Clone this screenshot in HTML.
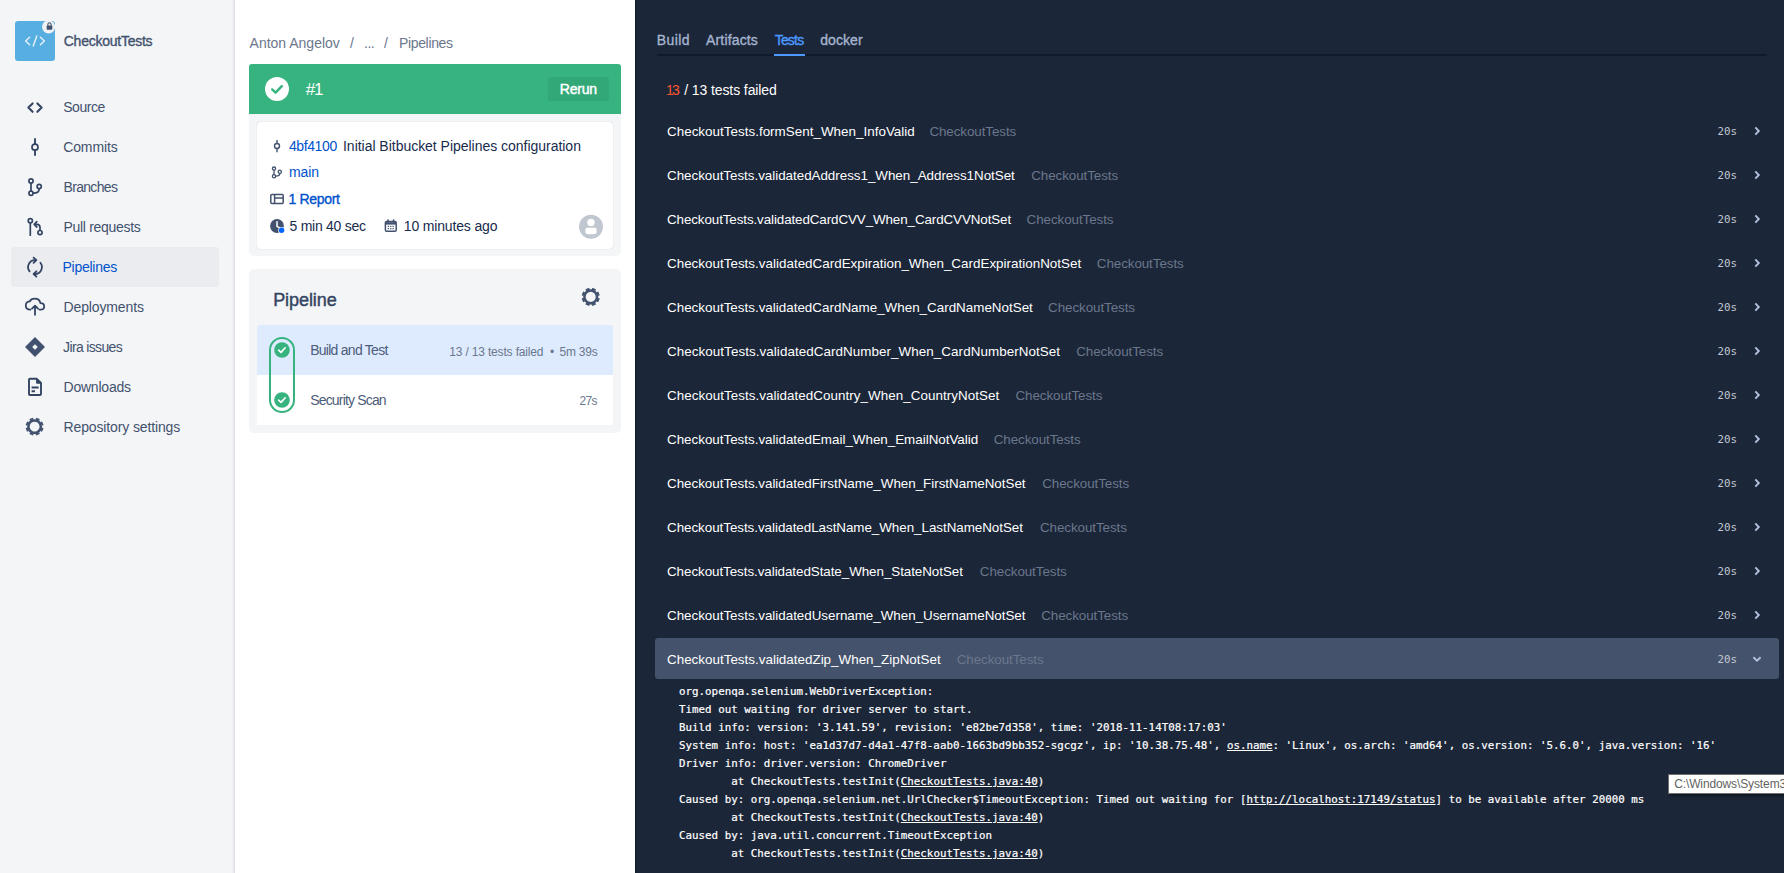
<!DOCTYPE html>
<html><head><meta charset="utf-8"><title>CheckoutTests / Pipelines</title>
<style>
*{box-sizing:border-box;margin:0;padding:0}
html,body{width:1784px;height:873px;overflow:hidden;background:#fff}
body{font-family:"Liberation Sans",sans-serif;font-size:14px;color:#172B4D;position:relative}
.abs{position:absolute;white-space:nowrap}
.sb{-webkit-text-stroke:0.35px currentColor}
.sb2{-webkit-text-stroke:0.45px currentColor}
#side{position:absolute;left:0;top:0;width:235px;height:873px;background:#f4f5f7;border-right:1px solid #dfe1e5}
#side .sh{position:absolute;left:232px;top:0;width:2px;height:873px;background:linear-gradient(to right,rgba(9,30,66,0),rgba(9,30,66,.07))}
#side .sel{position:absolute;left:11px;top:247px;width:208px;height:40px;background:#ebecf0;border-radius:3px}
.nav{position:absolute;left:63px;font-size:14px;color:#42526E;line-height:20px;white-space:nowrap}
.ico{position:absolute}
#mid{position:absolute;left:235px;top:0;width:400px;height:873px;background:#fff}
#mid .abs{line-height:20px}
#right{position:absolute;left:635px;top:0;width:1149px;height:873px;background:#1b2638;overflow:hidden}
.tab{position:absolute;top:30px;font-size:14px;color:#a5b4cf;line-height:20px;white-space:nowrap;-webkit-text-stroke:0.35px currentColor}
.row{position:absolute;left:20px;width:1124px;height:40px;border-radius:3px}
.row .n,.row .g{position:absolute;left:12px;top:11px;line-height:20px;font-size:13.4px;color:#fff;white-space:nowrap}
.row .g{color:#6b778c}
.row .d{position:absolute;right:42px;top:11px;line-height:20px;font-size:10.8px;font-family:"DejaVu Sans Mono","Liberation Mono",monospace;color:#c1c7d0}
.rsel .n,.rsel .g,.rsel .d{margin-top:1px}
.rsel svg{margin-top:1px}
.row svg{position:absolute;left:1096.4px;top:14.2px}
.log{position:absolute;left:44px;font-family:"DejaVu Sans Mono","Liberation Mono",monospace;font-size:10.8px;line-height:18px;color:#fff;white-space:pre;letter-spacing:0.022px;-webkit-text-stroke:0.2px #fff}
.log u{text-decoration:underline}
/*TUNE*/
#n0{letter-spacing:-0.250px;margin-left:0.75px}
#n1{letter-spacing:-0.440px;margin-left:0.20px}
#n2{letter-spacing:-0.117px;margin-left:0.20px}
#n3{letter-spacing:-0.679px;margin-left:0.50px}
#n4{letter-spacing:-0.300px;margin-left:0.50px}
#n5{letter-spacing:-0.263px;margin-left:-0.50px}
#n6{letter-spacing:-0.130px;margin-left:0.50px}
#n7{letter-spacing:-0.650px;margin-left:0.10px}
#n8{letter-spacing:-0.213px;margin-left:0.50px}
#n9{letter-spacing:-0.128px;margin-left:0.50px}
#b1{letter-spacing:-0.008px;margin-left:0.60px}
#b2{letter-spacing:-0.500px;margin-left:-1.00px}
#b3{letter-spacing:-0.331px;margin-left:-0.10px}
#h1{letter-spacing:-1.250px;margin-left:0.75px}
#h2{letter-spacing:-0.188px;margin-left:-0.25px}
#c1{letter-spacing:-0.383px;margin-left:-0.10px}
#c2{letter-spacing:-0.025px;margin-left:-0.50px}
#c3{letter-spacing:-0.133px;margin-left:0.00px}
#c4{letter-spacing:-0.343px;margin-left:-0.40px}
#c5{letter-spacing:-0.273px;margin-left:0.60px}
#c6{letter-spacing:-0.162px;margin-left:-0.20px}
#p0{letter-spacing:-0.071px;margin-left:0.20px}
#p1{letter-spacing:-0.738px;margin-left:0.20px}
#p4{letter-spacing:-0.825px;margin-left:0.20px}
#p2{letter-spacing:-0.163px;margin-left:-0.20px}
#p5{letter-spacing:-0.600px;margin-left:-0.20px}
#t1{letter-spacing:0.450px;margin-left:-0.30px}
#t2{letter-spacing:0.163px;margin-left:1.00px}
#t3{letter-spacing:-0.800px;margin-left:0.70px}
#t4{letter-spacing:0.080px;margin-left:-0.10px}
#s1{letter-spacing:-1.600px;margin-left:-0.10px}
#s2{letter-spacing:-0.094px;margin-left:0.40px}
#r0{letter-spacing:0.025px;margin-left:0.00px}
#g0{letter-spacing:-0.075px;margin-left:262.40px}
#r1{letter-spacing:-0.026px;margin-left:0.00px}
#g1{letter-spacing:-0.075px;margin-left:364.20px}
#r2{letter-spacing:-0.102px;margin-left:0.00px}
#g2{letter-spacing:-0.075px;margin-left:359.60px}
#r3{letter-spacing:0.018px;margin-left:0.00px}
#g3{letter-spacing:-0.075px;margin-left:429.80px}
#r4{letter-spacing:0.008px;margin-left:0.00px}
#g4{letter-spacing:-0.075px;margin-left:381.10px}
#r5{letter-spacing:0.069px;margin-left:0.00px}
#g5{letter-spacing:-0.075px;margin-left:409.20px}
#r6{letter-spacing:0.050px;margin-left:0.00px}
#g6{letter-spacing:-0.075px;margin-left:348.50px}
#r7{letter-spacing:-0.009px;margin-left:0.00px}
#g7{letter-spacing:-0.075px;margin-left:326.70px}
#r8{letter-spacing:-0.017px;margin-left:0.00px}
#g8{letter-spacing:-0.075px;margin-left:375.20px}
#r9{letter-spacing:-0.042px;margin-left:0.00px}
#g9{letter-spacing:-0.075px;margin-left:373.00px}
#r10{letter-spacing:-0.059px;margin-left:0.00px}
#g10{letter-spacing:-0.075px;margin-left:312.80px}
#r11{letter-spacing:-0.020px;margin-left:0.00px}
#g11{letter-spacing:-0.075px;margin-left:374.20px}
#r12{letter-spacing:0.013px;margin-left:0.00px}
#g12{letter-spacing:-0.075px;margin-left:289.70px}
#p3{letter-spacing:-0.18px}
/*END*/
</style></head><body>
<div id="side">
  <div class="sh"></div>
  <div class="sel"></div>
  <div class="abs" style="left:15px;top:21px;width:40px;height:40px;background:#57aee0;border-radius:3px"></div>
  <svg class="ico" style="left:0;top:0" width="234" height="450" viewBox="0 0 234 450" fill="none" stroke="#344563" stroke-width="2" stroke-linecap="round" stroke-linejoin="round">
    <!-- repo avatar glyph -->
    <g stroke="#e6f2fb" stroke-width="1.4">
      <path d="M29.6 37.2 L25.6 41 L29.6 44.8"/><path d="M40.4 37.2 L44.4 41 L40.4 44.8"/><path d="M36.8 36 L33.2 46"/>
    </g>
    <!-- lock badge -->
    <circle cx="48.6" cy="26.8" r="6.6" fill="#f0f1f4" stroke="none"/>
    <rect x="46.7" y="25.4" width="5.6" height="4.4" rx="0.8" fill="#42526E" stroke="none"/>
    <path d="M47.9 25.6 V24.4 A1.6 1.6 0 0 1 51.1 24.4 V25.6" stroke="#42526E" stroke-width="1.1"/>
    <!-- source -->
    <path d="M32.6 103.4 L28.4 107.6 L32.6 111.8 M37.4 103.4 L41.6 107.6 L37.4 111.8" stroke-width="2.1"/>
    <!-- commits -->
    <path d="M35 139 V144 M35 150.4 V155" stroke-width="1.9"/><circle cx="35" cy="147.2" r="3" stroke-width="1.7"/>
    <!-- branches -->
    <g stroke-width="1.7"><circle cx="31" cy="181" r="2.1"/><circle cx="31" cy="193.2" r="2.1"/><circle cx="39.2" cy="186.4" r="2.1"/>
    <path d="M31 183.4 V190.8 M39.2 188.8 C39.2 192.6 36.4 193.2 33.4 193.2"/></g>
    <!-- pull requests -->
    <g stroke-width="1.7"><circle cx="30.3" cy="220.8" r="2.1"/><circle cx="40" cy="232.6" r="2.1"/>
    <path d="M30.3 223.2 V235.2 M40 230.2 V227.4 C40 225.4 38.8 224.4 36.8 224.4 H34.6 M36.8 221.6 L34.2 224.4 L36.8 227.2"/></g>
    <!-- pipelines -->
    <g stroke-width="1.8"><path d="M29.6 271.4 A6.9 6.9 0 0 1 35 260.2 M40.4 262.8 A6.9 6.9 0 0 1 35 274"/>
    <path d="M33.6 257.6 L36.4 260.2 L33.6 262.9 M36.4 271.3 L33.6 274 L36.4 276.6"/></g>
    <!-- deployments -->
    <g stroke-width="1.8"><path d="M30.4 309.6 C27.6 309.6 25.8 307.8 25.8 305.4 C25.8 303 27.6 301.4 29.8 301.4 C30.6 299.6 32.6 298.6 34.8 298.6 C37.8 298.6 40 300.6 40.4 303.2 C42.6 303.2 44.2 304.6 44.2 306.4 C44.2 308.4 42.6 309.6 40.6 309.6 H39.4"/>
    <path d="M35 314.8 V306 M32 308.6 L35 305.6 L38 308.6"/></g>
    <!-- jira -->
    <path d="M35 337 L45 347 L35 357 L25 347 Z" fill="#42526E" stroke="none"/><path d="M35 344.2 L37.8 347 L35 349.8 L32.2 347 Z" fill="#f4f5f7" stroke="none"/>
    <!-- downloads -->
    <g stroke-width="1.9"><path d="M29 379.8 A1 1 0 0 1 30 378.8 H36.8 L41 383 V394 A1 1 0 0 1 40 395 H30 A1 1 0 0 1 29 394 Z"/><path d="M36.6 379 V383.2 H41" fill="#344563" stroke-width="1"/>
    <path d="M31.6 387.6 H38.6 M31.6 391.2 H35" stroke-width="2" stroke-linecap="butt"/></g>
    <!-- settings gear -->
    <g transform="translate(34.6,426.6) rotate(22.5)" stroke="#42526E"><circle r="6.2" stroke-width="2.5"/>
      <g stroke-width="3.9" stroke-linecap="butt"><path d="M0 -7 V-8.9 M0 7 V8.9 M-7 0 H-8.9 M7 0 H8.9"/><path d="M0 -7 V-8.9 M0 7 V8.9 M-7 0 H-8.9 M7 0 H8.9" transform="rotate(45)"/></g></g>
  </svg>
  <div class="abs sb" id="n0" style="left:63px;top:31px;font-size:14px;color:#42526E;line-height:20px">CheckoutTests</div>
  <div class="nav" id="n1" style="top:97px">Source</div>
  <div class="nav" id="n2" style="top:137px">Commits</div>
  <div class="nav" id="n3" style="top:177px">Branches</div>
  <div class="nav" id="n4" style="top:217px">Pull requests</div>
  <div class="nav" id="n5" style="top:257px;color:#0052CC">Pipelines</div>
  <div class="nav" id="n6" style="top:297px">Deployments</div>
  <div class="nav" id="n7" style="top:337px">Jira issues</div>
  <div class="nav" id="n8" style="top:377px">Downloads</div>
  <div class="nav" id="n9" style="top:417px">Repository settings</div>
</div>
<div id="mid">
  <div class="abs" id="b1" style="left:14px;top:33px;color:#6B778C">Anton Angelov</div>
  <div class="abs" style="left:115px;top:33px;color:#6B778C">/</div>
  <div class="abs" id="b2" style="left:130px;top:33px;color:#6B778C">...</div>
  <div class="abs" style="left:149px;top:33px;color:#6B778C">/</div>
  <div class="abs" id="b3" style="left:164px;top:33px;color:#6B778C">Pipelines</div>
  <div class="abs" style="left:14px;top:64px;width:372px;height:50px;background:#36B37E;border-radius:3px 3px 0 0"></div>
  <div class="abs" id="h1" style="left:70px;top:80px;font-size:17px;color:#fff">#1</div>
  <div class="abs" style="left:313px;top:77px;width:61px;height:24px;background:#33a877;border-radius:3px"></div>
  <div class="abs sb2" id="h2" style="left:325px;top:79px;color:#fff;font-size:14px">Rerun</div>
  <div class="abs" style="left:14px;top:114px;width:372px;height:142px;background:#f4f5f7;border-radius:0 0 5px 5px"></div>
  <div class="abs" style="left:22px;top:122px;width:356px;height:126.5px;background:#fff;border-radius:4px;box-shadow:0 0 1px rgba(9,30,66,.25)"></div>
  <div class="abs" id="c1" style="left:54px;top:136px;color:#0052CC">4bf4100</div>
  <div class="abs" id="c2" style="left:108.5px;top:136px">Initial Bitbucket Pipelines configuration</div>
  <div class="abs" id="c3" style="left:54px;top:162px;color:#0052CC">main</div>
  <div class="abs sb" id="c4" style="left:54px;top:189px;color:#0052CC">1 Report</div>
  <div class="abs" id="c5" style="left:54px;top:216px">5 min 40 sec</div>
  <div class="abs" id="c6" style="left:169px;top:216px">10 minutes ago</div>
  <div class="abs" style="left:14px;top:269px;width:372px;height:163.5px;background:#f4f5f7;border-radius:5px"></div>
  <div class="abs sb2" id="p0" style="left:38px;top:288px;font-size:18px;color:#344563;line-height:24px">Pipeline</div>
  <div class="abs" style="left:22px;top:324.5px;width:356px;height:50px;background:#DEEBFF;border-radius:3px 3px 0 0"></div>
  <div class="abs" style="left:22px;top:374.5px;width:356px;height:50px;background:#fff"></div>
  <div class="abs" style="left:34px;top:337px;width:26px;height:76px;border:2px solid #36B37E;border-radius:13px"></div>
  <div class="abs" id="p1" style="left:75px;top:340px;color:#4d5d7a">Build and Test</div>
  <div class="abs" id="p2" style="left:214.4px;top:342px;font-size:12px;color:#6B778C">13 / 13 tests failed</div>
  <div class="abs" style="left:314.9px;top:342px;font-size:12px;color:#6B778C">•</div>
  <div class="abs" id="p3" style="left:324.4px;top:342px;font-size:12px;color:#6B778C">5m 39s</div>
  <div class="abs" id="p4" style="left:75px;top:390px;color:#4d5d7a">Security Scan</div>
  <div class="abs" id="p5" style="left:344.6px;top:391px;font-size:12px;color:#6B778C">27s</div>
  <svg class="ico" style="left:0;top:0" width="400" height="450" viewBox="235 0 400 450" fill="none" stroke="#42526E" stroke-width="1.5" stroke-linecap="round" stroke-linejoin="round">
    <!-- header check -->
    <circle cx="277" cy="89" r="12" fill="#fff" stroke="none"/>
    <path d="M272.2 89.4 L275.6 92.6 L281.8 86.2" stroke="#36B37E" stroke-width="2.4"/>
    <!-- commit icon -->
    <path d="M277 140.4 V143.2 M277 148.8 V151.8" stroke-width="1.4"/><circle cx="277" cy="146" r="2.5" stroke-width="1.4"/>
    <!-- branch icon -->
    <g stroke-width="1.3"><circle cx="274" cy="168.6" r="1.6"/><circle cx="274" cy="176.2" r="1.6"/><circle cx="279.8" cy="171.8" r="1.6"/>
    <path d="M274 170.4 V174.4 M279.8 173.6 C279.8 175.8 278 176.2 275.8 176.2"/></g>
    <!-- report icon -->
    <g stroke-width="1.5"><rect x="270.8" y="194.6" width="12.4" height="8.8" rx="1"/><path d="M274.6 194.8 V203.2 M274.6 198 H283"/></g>
    <!-- clock icon -->
    <circle cx="277" cy="226" r="6.9" fill="#42526E" stroke="none"/>
    <path d="M277 221.8 V226.4 L279.6 227.8" stroke="#fff" stroke-width="1.5"/>
    <circle cx="281.6" cy="230.3" r="3.4" fill="#fff" stroke="none"/><circle cx="281.6" cy="230.3" r="2.7" fill="#0065FF" stroke="none"/>
    <!-- calendar -->
    <g stroke-width="1.5"><rect x="385.4" y="221.4" width="10.8" height="9.8" rx="1.2"/><path d="M385.6 223.4 H396" stroke-width="2.4" stroke-linecap="butt"/><path d="M388 220 V222 M393.6 220 V222" stroke-width="1.6"/>
    <path d="M387.8 226.4 H393.8 M387.8 228.6 H393.8" stroke-width="1.3" stroke-dasharray="1.3 1.05" stroke-linecap="butt"/></g>
    <!-- avatar -->
    <circle cx="591" cy="226.8" r="12" fill="#c1c7d0" stroke="none"/>
    <circle cx="591" cy="222.4" r="3.7" fill="#fff" stroke="none"/>
    <path d="M585.4 229.4 A1.6 1.6 0 0 1 587 227.8 H595 A1.6 1.6 0 0 1 596.6 229.4 V232.4 C596.6 235 585.4 235 585.4 232.4 Z" fill="#fff" stroke="none"/>
    <!-- gear -->
    <g transform="translate(590.7,296.9) rotate(22.5)" stroke="#42526E"><circle r="6.3" stroke-width="2.5"/>
      <g stroke-width="4" stroke-linecap="butt"><path d="M0 -7 V-9 M0 7 V9 M-7 0 H-9 M7 0 H9"/><path d="M0 -7 V-9 M0 7 V9 M-7 0 H-9 M7 0 H9" transform="rotate(45)"/></g></g>
    <!-- step checks -->
    <circle cx="282" cy="350" r="7.8" fill="#36B37E" stroke="none"/><path d="M278.6 350.2 L281 352.4 L285.2 347.8" stroke="#fff" stroke-width="1.7"/>
    <circle cx="282" cy="400" r="7.8" fill="#36B37E" stroke="none"/><path d="M278.6 400.2 L281 402.4 L285.2 397.8" stroke="#fff" stroke-width="1.7"/>
  </svg>
</div>
<div id="right">
  <div class="abs" style="left:0;top:0;width:1px;height:873px;background:#0c182e"></div>
  <div class="abs" style="left:22px;top:54px;width:1110px;height:2px;background:#111a2b"></div>
  <div class="abs" style="left:139px;top:54px;width:30.5px;height:2px;background:#4C9AFF"></div>
  <div class="tab" id="t1" style="left:22px">Build</div>
  <div class="tab" id="t2" style="left:70px">Artifacts</div>
  <div class="tab" id="t3" style="left:139px;color:#4C9AFF">Tests</div>
  <div class="tab" id="t4" style="left:185.3px">docker</div>
  <div class="abs" id="s1" style="left:31px;top:80px;line-height:20px;color:#FF5630">13</div>
  <div class="abs" id="s2" style="left:48.8px;top:80px;line-height:20px;color:#fff">/ 13 tests failed</div>
  <div class="row" style="top:111px"><div class="n" id="r0">CheckoutTests.formSent_When_InfoValid</div><div class="g" id="g0">CheckoutTests</div><div class="d">20s</div><svg width="12" height="12" viewBox="-6 -6 12 12"><path d="M-1.7 -3.6 L1.8 0 L-1.7 3.6" fill="none" stroke="#b3bfde" stroke-width="1.9" stroke-linejoin="miter"/></svg></div>
  <div class="row" style="top:155px"><div class="n" id="r1">CheckoutTests.validatedAddress1_When_Address1NotSet</div><div class="g" id="g1">CheckoutTests</div><div class="d">20s</div><svg width="12" height="12" viewBox="-6 -6 12 12"><path d="M-1.7 -3.6 L1.8 0 L-1.7 3.6" fill="none" stroke="#b3bfde" stroke-width="1.9" stroke-linejoin="miter"/></svg></div>
  <div class="row" style="top:199px"><div class="n" id="r2">CheckoutTests.validatedCardCVV_When_CardCVVNotSet</div><div class="g" id="g2">CheckoutTests</div><div class="d">20s</div><svg width="12" height="12" viewBox="-6 -6 12 12"><path d="M-1.7 -3.6 L1.8 0 L-1.7 3.6" fill="none" stroke="#b3bfde" stroke-width="1.9" stroke-linejoin="miter"/></svg></div>
  <div class="row" style="top:243px"><div class="n" id="r3">CheckoutTests.validatedCardExpiration_When_CardExpirationNotSet</div><div class="g" id="g3">CheckoutTests</div><div class="d">20s</div><svg width="12" height="12" viewBox="-6 -6 12 12"><path d="M-1.7 -3.6 L1.8 0 L-1.7 3.6" fill="none" stroke="#b3bfde" stroke-width="1.9" stroke-linejoin="miter"/></svg></div>
  <div class="row" style="top:287px"><div class="n" id="r4">CheckoutTests.validatedCardName_When_CardNameNotSet</div><div class="g" id="g4">CheckoutTests</div><div class="d">20s</div><svg width="12" height="12" viewBox="-6 -6 12 12"><path d="M-1.7 -3.6 L1.8 0 L-1.7 3.6" fill="none" stroke="#b3bfde" stroke-width="1.9" stroke-linejoin="miter"/></svg></div>
  <div class="row" style="top:331px"><div class="n" id="r5">CheckoutTests.validatedCardNumber_When_CardNumberNotSet</div><div class="g" id="g5">CheckoutTests</div><div class="d">20s</div><svg width="12" height="12" viewBox="-6 -6 12 12"><path d="M-1.7 -3.6 L1.8 0 L-1.7 3.6" fill="none" stroke="#b3bfde" stroke-width="1.9" stroke-linejoin="miter"/></svg></div>
  <div class="row" style="top:375px"><div class="n" id="r6">CheckoutTests.validatedCountry_When_CountryNotSet</div><div class="g" id="g6">CheckoutTests</div><div class="d">20s</div><svg width="12" height="12" viewBox="-6 -6 12 12"><path d="M-1.7 -3.6 L1.8 0 L-1.7 3.6" fill="none" stroke="#b3bfde" stroke-width="1.9" stroke-linejoin="miter"/></svg></div>
  <div class="row" style="top:419px"><div class="n" id="r7">CheckoutTests.validatedEmail_When_EmailNotValid</div><div class="g" id="g7">CheckoutTests</div><div class="d">20s</div><svg width="12" height="12" viewBox="-6 -6 12 12"><path d="M-1.7 -3.6 L1.8 0 L-1.7 3.6" fill="none" stroke="#b3bfde" stroke-width="1.9" stroke-linejoin="miter"/></svg></div>
  <div class="row" style="top:463px"><div class="n" id="r8">CheckoutTests.validatedFirstName_When_FirstNameNotSet</div><div class="g" id="g8">CheckoutTests</div><div class="d">20s</div><svg width="12" height="12" viewBox="-6 -6 12 12"><path d="M-1.7 -3.6 L1.8 0 L-1.7 3.6" fill="none" stroke="#b3bfde" stroke-width="1.9" stroke-linejoin="miter"/></svg></div>
  <div class="row" style="top:507px"><div class="n" id="r9">CheckoutTests.validatedLastName_When_LastNameNotSet</div><div class="g" id="g9">CheckoutTests</div><div class="d">20s</div><svg width="12" height="12" viewBox="-6 -6 12 12"><path d="M-1.7 -3.6 L1.8 0 L-1.7 3.6" fill="none" stroke="#b3bfde" stroke-width="1.9" stroke-linejoin="miter"/></svg></div>
  <div class="row" style="top:551px"><div class="n" id="r10">CheckoutTests.validatedState_When_StateNotSet</div><div class="g" id="g10">CheckoutTests</div><div class="d">20s</div><svg width="12" height="12" viewBox="-6 -6 12 12"><path d="M-1.7 -3.6 L1.8 0 L-1.7 3.6" fill="none" stroke="#b3bfde" stroke-width="1.9" stroke-linejoin="miter"/></svg></div>
  <div class="row" style="top:595px"><div class="n" id="r11">CheckoutTests.validatedUsername_When_UsernameNotSet</div><div class="g" id="g11">CheckoutTests</div><div class="d">20s</div><svg width="12" height="12" viewBox="-6 -6 12 12"><path d="M-1.7 -3.6 L1.8 0 L-1.7 3.6" fill="none" stroke="#b3bfde" stroke-width="1.9" stroke-linejoin="miter"/></svg></div>
  <div class="row rsel" style="top:638px;background:#44526b;height:41px"><div class="n" id="r12">CheckoutTests.validatedZip_When_ZipNotSet</div><div class="g" id="g12">CheckoutTests</div><div class="d">20s</div><svg width="12" height="12" viewBox="-6 -6 12 12"><path d="M-3.6 -1.7 L0 1.8 L3.6 -1.7" fill="none" stroke="#b3bfde" stroke-width="1.9" stroke-linejoin="miter"/></svg></div>
  <div class="log" style="top:683px">org.openqa.selenium.WebDriverException:</div>
  <div class="log" style="top:701px">Timed out waiting for driver server to start.</div>
  <div class="log" style="top:719px">Build info: version: '3.141.59', revision: 'e82be7d358', time: '2018-11-14T08:17:03'</div>
  <div class="log" style="top:737px">System info: host: 'ea1d37d7-d4a1-47f8-aab0-1663bd9bb352-sgcgz', ip: '10.38.75.48', <u>os.name</u>: 'Linux', os.arch: 'amd64', os.version: '5.6.0', java.version: '16'</div>
  <div class="log" style="top:755px">Driver info: driver.version: ChromeDriver</div>
  <div class="log" style="top:773px">        at CheckoutTests.testInit(<u>CheckoutTests.java:40</u>)</div>
  <div class="log" style="top:791px">Caused by: org.openqa.selenium.net.UrlChecker$TimeoutException: Timed out waiting for [<u>http://localhost:17149/status</u>] to be available after 20000 ms</div>
  <div class="log" style="top:809px">        at CheckoutTests.testInit(<u>CheckoutTests.java:40</u>)</div>
  <div class="log" style="top:827px">Caused by: java.util.concurrent.TimeoutException</div>
  <div class="log" style="top:845px">        at CheckoutTests.testInit(<u>CheckoutTests.java:40</u>)</div>
  <div class="abs" style="left:1033px;top:774px;width:130px;height:20px;background:#fff;border:1px solid #6f6f6f;box-shadow:2px 2px 3px rgba(0,0,0,.45)"></div>
  <div class="abs" id="tt" style="left:1039.2px;top:776px;font-size:12px;line-height:16px;color:#636363;letter-spacing:-0.12px">C:\Windows\System32</div>
</div>
</body></html>
